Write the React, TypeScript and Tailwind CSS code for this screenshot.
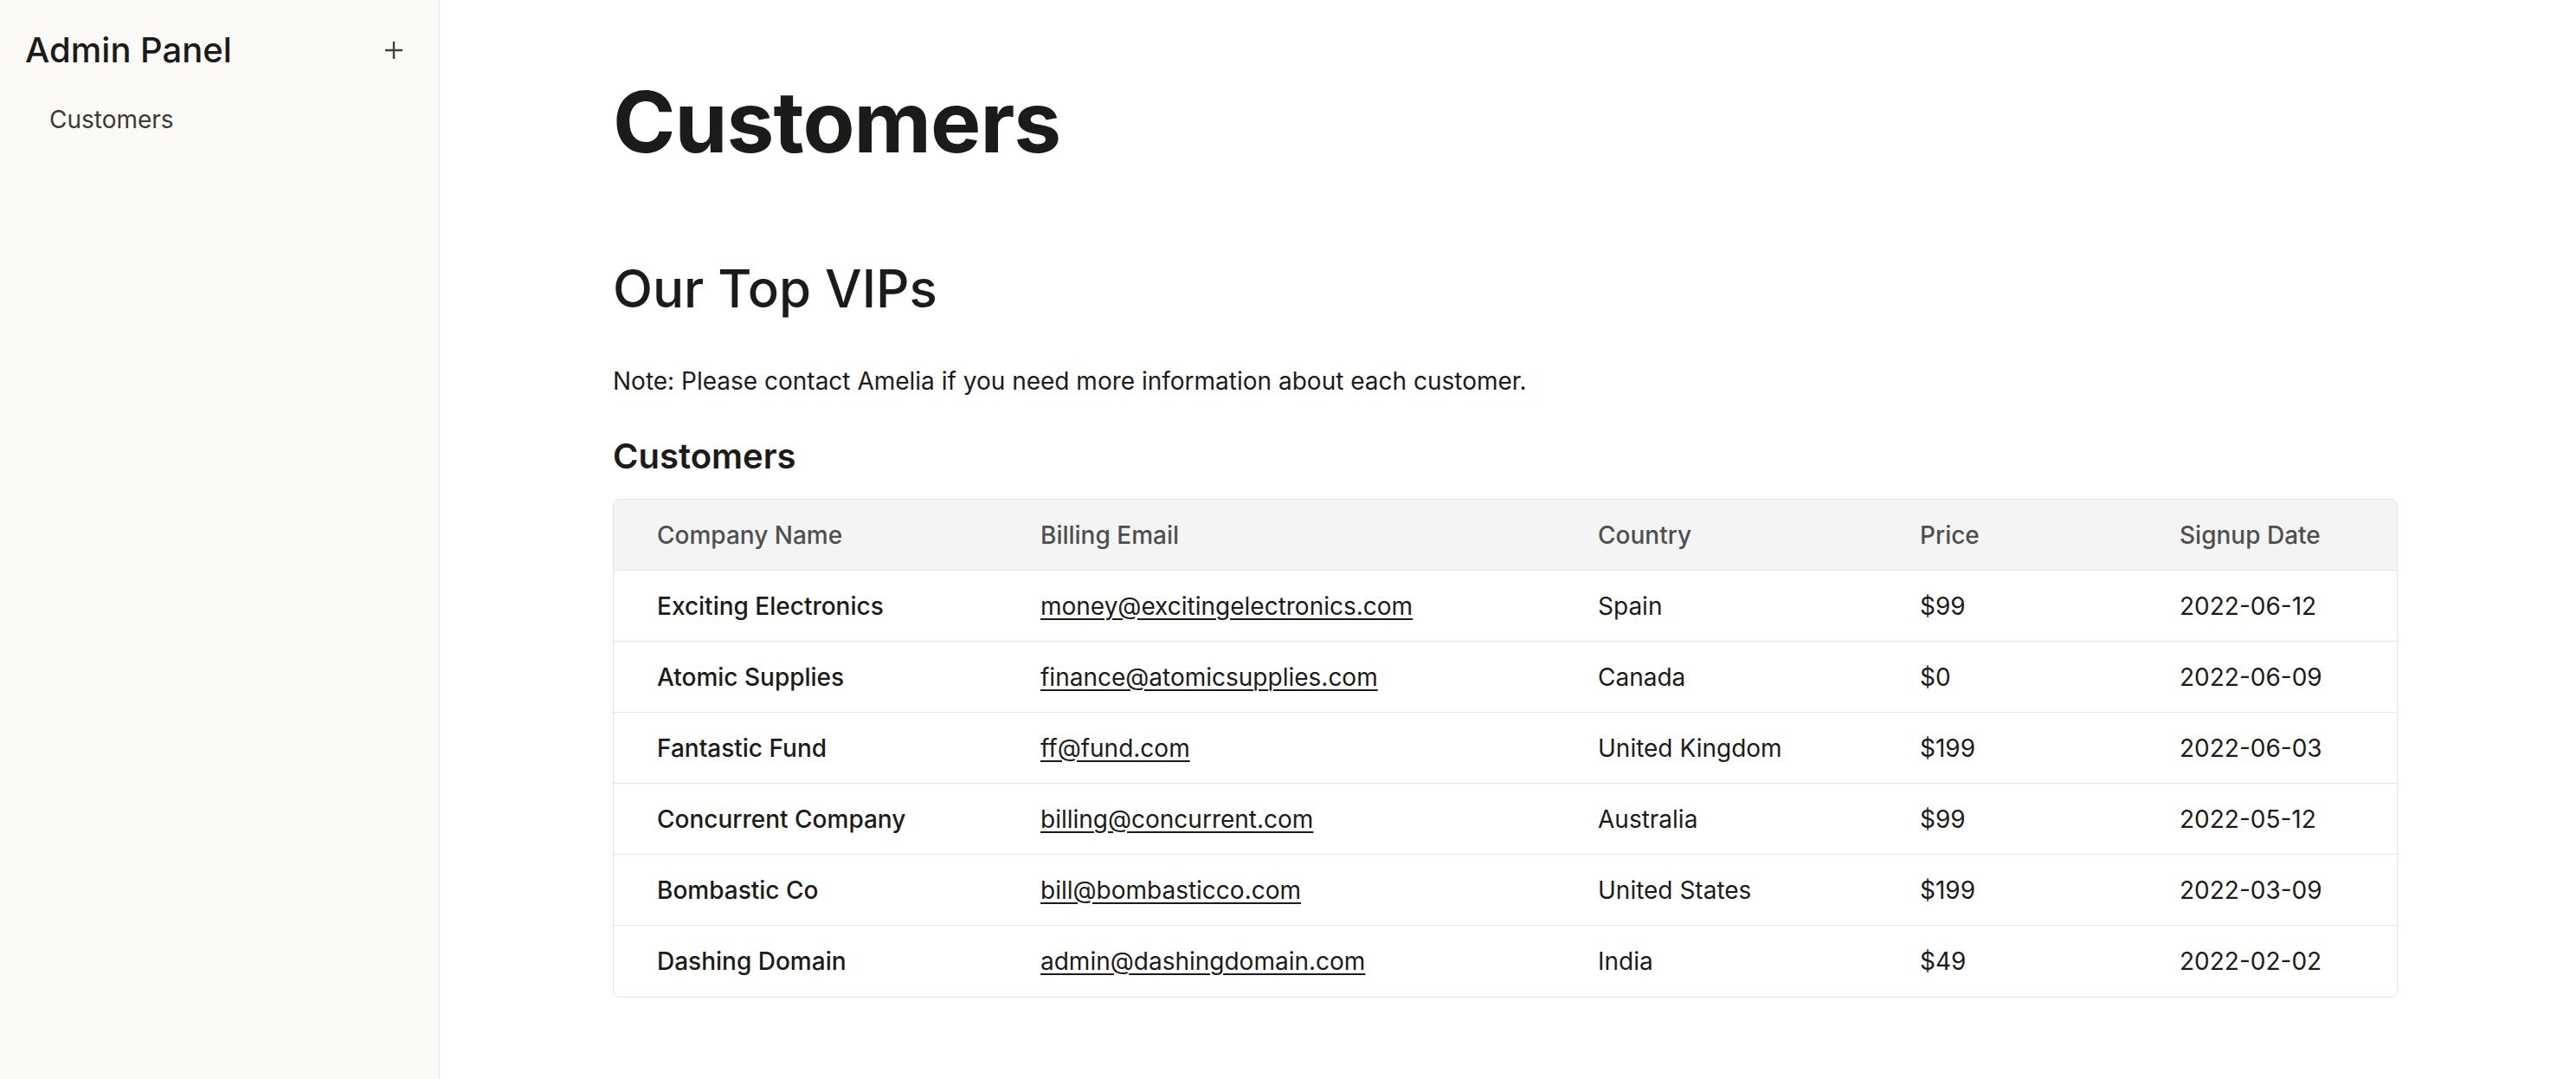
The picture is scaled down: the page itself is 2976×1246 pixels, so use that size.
import React from "react";

const rows = [
  ["Exciting Electronics", "money@excitingelectronics.com", "Spain", "$99", "2022-06-12"],
  ["Atomic Supplies", "finance@atomicsupplies.com", "Canada", "$0", "2022-06-09"],
  ["Fantastic Fund", "ff@fund.com", "United Kingdom", "$199", "2022-06-03"],
  ["Concurrent Company", "billing@concurrent.com", "Australia", "$99", "2022-05-12"],
  ["Bombastic Co", "bill@bombasticco.com", "United States", "$199", "2022-03-09"],
  ["Dashing Domain", "admin@dashingdomain.com", "India", "$49", "2022-02-02"],
];

export default function App() {
  return (
    <div
      className="flex min-h-[1246px] w-full bg-white text-[#1c1b19]"
      style={{ fontFamily: "Inter, 'Noto Sans', sans-serif" }}
    >
      <aside className="w-[508px] shrink-0 border-r border-[#e6e5e3] bg-[#fbfaf7] pl-[29px] pr-[40px] pt-[38px]">
        <div className="flex items-center justify-between">
          <span className="text-[40px] font-medium leading-none">Admin Panel</span>
          <svg width="24" height="24" viewBox="0 0 24 24" className="text-[#3f3f3f]">
            <path d="M12 2v20M2 12h20" stroke="currentColor" strokeWidth="2.4" />
          </svg>
        </div>
        <div className="mt-[46px] pl-[28px] text-[28px] leading-none text-[#3a3936]">Customers</div>
      </aside>
      <main className="flex-1 pl-[200px] pr-[206px] pt-[92px]">
        <h1 className="text-[98px] font-bold leading-none tracking-[-0.01em]">Customers</h1>
        <h2 className="mt-[113px] text-[60px] font-medium leading-none">Our Top VIPs</h2>
        <p className="mt-[63px] text-[28px] leading-none">
          Note: Please contact Amelia if you need more information about each customer.
        </p>
        <h3 className="mt-[53px] text-[40px] font-semibold leading-none">Customers</h3>
        <div className="mt-[29px] overflow-hidden rounded-[8px] border border-[#e4e4e4]">
          <div className="grid h-[82px] grid-cols-[444px_644px_372px_300px_1fr] items-center border-b border-[#e4e4e4] bg-[#f4f4f4] text-[28px] font-medium text-[#4f4f4f]">
            <div className="pl-[50px]">Company Name</div>
            <div className="pl-[49px]">Billing Email</div>
            <div className="pl-[49px]">Country</div>
            <div className="pl-[49px]">Price</div>
            <div className="pl-[49px]">Signup Date</div>
          </div>
          {rows.map((r, i) => (
            <div
              key={i}
              className={`grid h-[82px] grid-cols-[444px_644px_372px_300px_1fr] items-center text-[28px] ${
                i < rows.length - 1 ? "border-b border-[#e4e4e4]" : ""
              }`}
            >
              <div className="pl-[50px] font-medium">{r[0]}</div>
              <div className="pl-[49px] underline underline-offset-[4px] decoration-[1.5px]">{r[1]}</div>
              <div className="pl-[49px]">{r[2]}</div>
              <div className="pl-[49px]">{r[3]}</div>
              <div className="pl-[49px]">{r[4]}</div>
            </div>
          ))}
        </div>
      </main>
    </div>
  );
}
